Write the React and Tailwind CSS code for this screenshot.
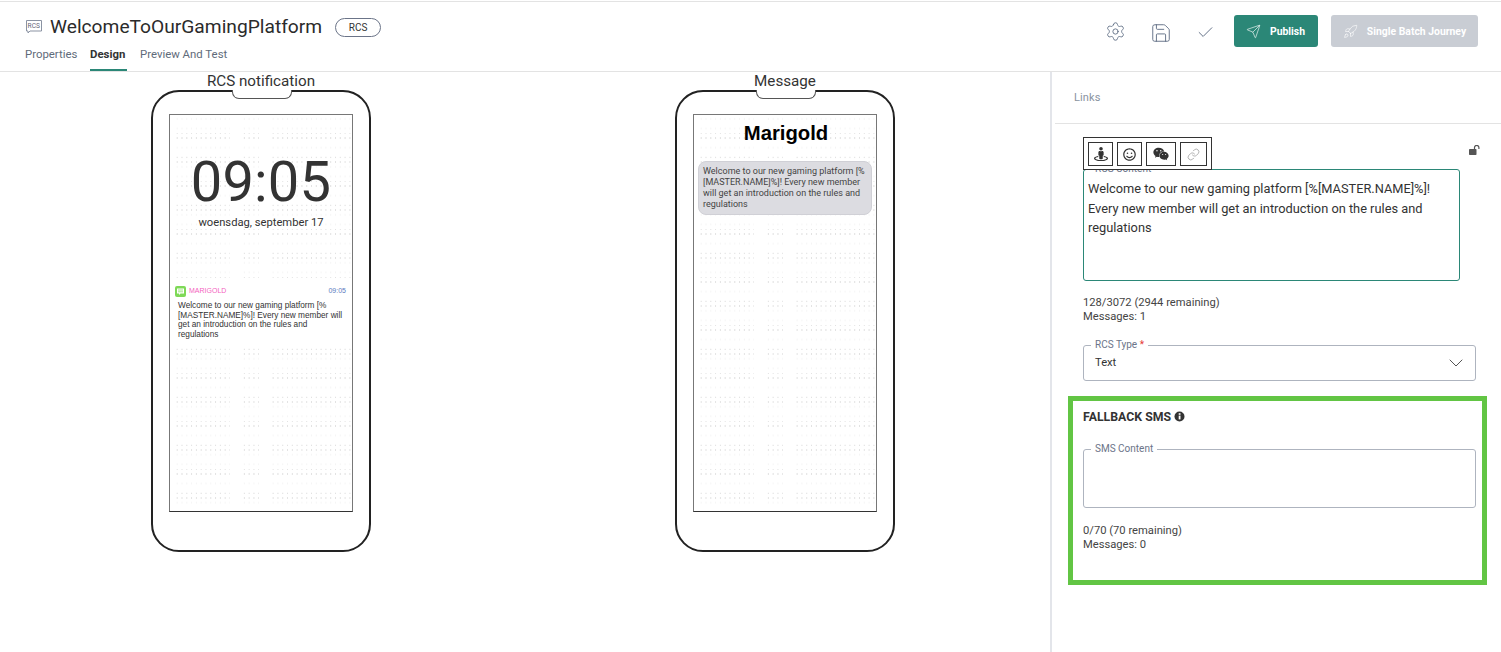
import React from "react";
import { Settings, Save, Check, Send, Rocket, ChevronDown, Link } from "lucide-react";
import { FaStreetView, FaRegSmile, FaWeixin } from "react-icons/fa";

const font = { fontFamily: "Roboto, sans-serif" };
const dots =
  "[background-image:linear-gradient(to_right,#fff_4px,transparent_4px,transparent_60px,#fff_60px,#fff_73px,transparent_73px,transparent_89px,#fff_89px,#fff_102px,transparent_102px),radial-gradient(circle_at_2.4px_18.5px,#e2e2e2_0.6px,transparent_0.9px),radial-gradient(circle_at_2.4px_23px,#e2e2e2_0.6px,transparent_0.9px),radial-gradient(circle_at_2.4px_4px,#f4f4f4_0.6px,transparent_0.9px)] [background-size:100%_100%,4.8px_24px,4.8px_24px,4.8px_9.6px]";

function Phone({ title, children }) {
  return (
    <div className="flex flex-col items-center">
      <div className="h-[18px] text-[15.2px] leading-[18px] text-[#333]">{title}</div>
      <div className="relative w-[220px] h-[462px] border-2 border-[#222] rounded-[28px] bg-white pt-[22px] flex justify-center">
        <div className="absolute top-[-2px] left-[79px] w-[60px] h-[9px] border border-t-0 border-[#555] rounded-b-[7px] bg-white" />
        <div className={`w-[184px] h-[398px] border border-[#777] border-b-[#333] ${dots}`}>{children}</div>
      </div>
    </div>
  );
}

function Notification() {
  return (
    <div className="flex flex-col">
      <div className="mt-[37px] text-center text-[56px] leading-[60px] text-[#333] tracking-[0.2px]">09:05</div>
      <div className="mt-[3px] text-center text-[11.2px] leading-[16px] text-[#333]">woensdag, september 17</div>
      <div className="mt-[49px] pt-[4px] px-[5px] h-[68px] bg-white">
        <div className="flex items-center h-[14px]">
          <svg width="11" height="11" viewBox="0 0 11 11" className="shrink-0">
            <rect width="11" height="11" rx="2" fill="#7ed957" />
            <path d="M2 2.5h7v5H5.5L4 9V7.5H2z" fill="#fff" />
            <path d="M3 4h5M3 5.8h5" stroke="#7ed957" strokeWidth="0.7" />
          </svg>
          <div className="ml-[3px] text-[7px] text-[#f45fc0] font-['Liberation_Sans',sans-serif]">MARIGOLD</div>
          <div className="ml-auto mr-[1px] text-[7px] text-[#5b7bc0] font-['Liberation_Sans',sans-serif]">09:05</div>
        </div>
        <div className="mt-[3px] pl-[3px] pr-[2px] text-[8.25px] leading-[9.5px] text-[#333] font-['Liberation_Sans',sans-serif]">
          Welcome to our new gaming platform [%[MASTER.NAME]%]! Every new member will get an introduction on the rules and regulations
        </div>
      </div>
    </div>
  );
}

function Message() {
  return (
    <div className="flex flex-col">
      <div className="mt-[5px] pl-[2px] text-center text-[20.3px] leading-[26px] font-bold text-black font-['Liberation_Sans',sans-serif]">Marigold</div>
      <div className="mx-[4px] mt-[15px] pl-[4px] pr-[5px] py-[4px] rounded-[8px] bg-[#dcdce1] border border-[#d0d0d6] text-[9px] leading-[11px] text-[#444]">
        Welcome to our new gaming platform [%[MASTER.NAME]%]! Every new member will get an introduction on the rules and regulations
      </div>
    </div>
  );
}

function ToolBtn({ className = "", children }) {
  return <div className={`h-[24px] border border-[#333] flex items-center justify-center bg-white ${className}`}>{children}</div>;
}

function Counter({ a, b }) {
  return (
    <div className="text-[11.2px] leading-[14px] text-[#444]">
      <div>{a}</div>
      <div>{b}</div>
    </div>
  );
}

export default function App() {
  return (
    <div style={font} className="w-[1501px] h-[652px] overflow-hidden bg-white flex flex-col">
      <header className="mt-[1px] h-[71px] shrink-0 border-t border-b border-[#e3e3e3] flex justify-between pl-[25px] pr-[23px]">
        <div className="flex flex-col">
          <div className="flex items-center h-[39px] pt-[11px]">
            <svg width="18" height="16" viewBox="0 0 18 16" fill="none" className="mr-[7px] -mt-[1px]">
              <path d="M1.5 1.5h15v10.5H5l-2 2v-2H1.5z" stroke="#8b93a3" strokeWidth="1" />
              <text x="2.6" y="9.2" fontSize="6.6" fill="#667" fontFamily="Roboto, sans-serif">RCS</text>
            </svg>
            <div className="text-[19.2px] leading-[26px] text-[#2b2b2b]">WelcomeToOurGamingPlatform</div>
            <div className="ml-[13px] mt-[1px] w-[46px] h-[19px] rounded-full border border-[#6b7488] text-[10px] flex items-center justify-center text-[#333]">RCS</div>
          </div>
          <nav className="flex mt-[4px] text-[11.4px] text-[#5f6b7a] h-[26px]">
            <div className="pt-[1px] w-[52px]">Properties</div>
            <div className="ml-[13px] w-[37px] pt-[1px] font-bold text-[#333] border-b-[2px] border-[#2b8777] whitespace-nowrap">Design</div>
            <div className="ml-[13px] pt-[1px]">Preview And Test</div>
          </nav>
        </div>
        <div className="flex items-start pt-[13px]">
          <Settings size={21} strokeWidth={1} className="text-[#5d6b82] mt-[6px]" />
          <Save size={22} strokeWidth={1} className="text-[#5d6b82] mt-[7px] ml-[24px]" />
          <Check size={19} strokeWidth={1.2} className="text-[#5d6b82] mt-[8px] ml-[24px]" />
          <button className="ml-[19px] w-[84px] h-[32px] rounded-[3px] bg-[#2b8777] flex items-center justify-center text-white text-[10.4px] font-bold pt-[1px]">
            <Send size={15} strokeWidth={1} className="mr-[9px] -mt-[1px] -ml-[1px]" />Publish
          </button>
          <button className="ml-[13px] w-[147px] h-[32px] rounded-[3px] bg-[#c9cdd4] flex items-center justify-center text-white text-[10.4px] font-bold pt-[1px]">
            <Rocket size={15} strokeWidth={1} className="mr-[9px] -mt-[1px]" />Single Batch Journey
          </button>
        </div>
      </header>
      <main className="flex flex-1 min-h-0">
        <section className="w-[1050px] grid grid-cols-[522px_526px] content-start">
          <Phone title="RCS notification"><Notification /></Phone>
          <Phone title="Message"><Message /></Phone>
        </section>
        <aside className="flex-1 border-l-2 border-[#e3e5ea] pl-[3px]">
          <div className="h-[52px] border-b border-[#e3e3e3] pl-[19px] pt-[19px] text-[11px] leading-[14px] text-[#8a93a0] tracking-[0.1px]">Links</div>
          <div className="pl-[28px] pr-[25px]">
            <div className="relative mt-[45px] h-[112px] w-[377px] border border-[#2b8777] rounded-[3px] px-[4px] pt-[9px] text-[12.8px] leading-[19.5px] text-[#333]">
              <div className="absolute left-[7px] -top-[7px] bg-white px-[4px] text-[10px] leading-[12px] text-[#6b7488]">RCS Content</div>
              Welcome to our new gaming platform [%[MASTER.NAME]%]! Every new member will get an introduction on the rules and regulations
              <div className="absolute -left-[1px] -top-[33px] w-[129px] h-[33px] border border-[#333] bg-white flex gap-[4px] pl-[4px] pt-[4px]">
                <ToolBtn className="w-[25px]"><FaStreetView size={14} className="text-[#333]" /></ToolBtn>
                <ToolBtn className="w-[25px]"><FaRegSmile size={13} className="text-[#333]" /></ToolBtn>
                <ToolBtn className="w-[30px]"><FaWeixin size={16} className="text-[#333]" /></ToolBtn>
                <ToolBtn className="w-[27px]"><Link size={13} strokeWidth={1.2} className="text-[#8a8a8a]" /></ToolBtn>
              </div>
              <svg width="12" height="10" viewBox="0 0 12 10" className="absolute left-[385px] -top-[25px]">
                <rect x="0" y="4" width="7.5" height="6" rx="0.8" fill="#555" />
                <path d="M5.5 4V2.6a2.2 2.2 0 0 1 4.4 0V4" fill="none" stroke="#555" strokeWidth="1.2" />
              </svg>
            </div>
            <div className="mt-[15px]"><Counter a="128/3072 (2944 remaining)" b="Messages: 1" /></div>
            <div className="relative mt-[21px] h-[36px] border border-[#aeb4bf] rounded-[3px] pl-[11px] flex items-center justify-between pr-[7px] text-[11.2px] text-[#333]">
              <div className="absolute left-[7px] -top-[7px] bg-white px-[4px] text-[10px] leading-[12px] text-[#6b7488]">RCS Type <span className="text-[#e53935]">*</span></div>
              <span className="pt-[1px]">Text</span>
              <ChevronDown size={24} strokeWidth={1} className="text-[#555]" />
            </div>
            <div className="-ml-[15px] -mr-[11px] mt-[15px] h-[189px] border-[5px] border-[#62c544] pl-[10px] pr-[6px]">
              <div className="mt-[8px] flex items-center text-[12.3px] leading-[16px] font-bold text-[#333]">
                FALLBACK SMS
                <svg width="11" height="11" viewBox="0 0 11 11" className="ml-[3px] -mt-[2px]"><circle cx="5.5" cy="5.5" r="5" fill="#333" /><rect x="4.7" y="4.6" width="1.8" height="3.8" fill="#fff" /><rect x="4.7" y="2.2" width="1.8" height="1.6" fill="#fff" /></svg>
              </div>
              <div className="relative mt-[24px] h-[59px] border border-[#aeb4bf] rounded-[3px]">
                <div className="absolute left-[7px] -top-[7px] bg-white px-[4px] text-[10px] leading-[12px] text-[#6b7488]">SMS Content</div>
              </div>
              <div className="mt-[16px]"><Counter a="0/70 (70 remaining)" b="Messages: 0" /></div>
            </div>
          </div>
        </aside>
      </main>
    </div>
  );
}
